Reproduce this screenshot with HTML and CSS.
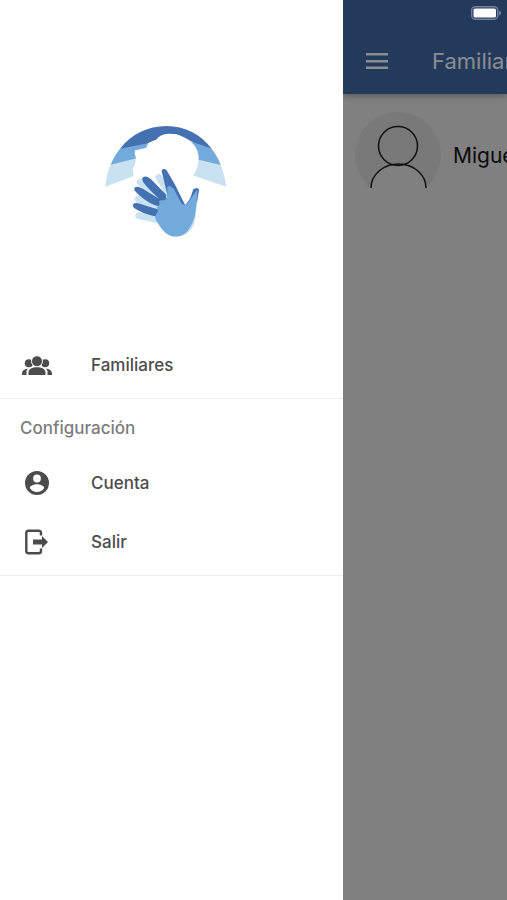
FILE: index.html
```html
<!DOCTYPE html>
<html lang="es">
<head>
<meta charset="utf-8">
<meta name="viewport" content="width=device-width, initial-scale=1">
<title>Familiares</title>
<link rel="stylesheet" href="styles.css">
</head>
<body>
<div class="app">
  <aside class="drawer">
    <header class="brand">
      <svg class="logo" viewBox="0 0 420 390" aria-hidden="true">
        <path fill="#c8e2f2" d="M27 213C31 187 36 166 44 145L120 126L130 160L113 180L27 213ZM391 212C387 186 382 165 374 146L300 127L280 175Z"/>
        <path fill="#74a9db" d="M44 146C51 128 60 112 72 98L160 70L160 105L125 126ZM374 147C367 128 358 111 345 97L285 77L290 127Z"/>
        <path fill="#4471b2" d="M72 98C104 56 155 30 212 30C266 30 316 56 347 98L298 82L240 54L180 72L156 82Z"/>
        <path fill="#fff" d="M180 71C190 58 204 52 221 53C243 54 262 60 278 72C298 87 308 105 308 126C307 147 302 163 293 176L273 200L240 245L150 205L113 180L110 160L117 145L120 125L116 114L117 103L126 101L151 95L156 82Z"/>
        <g fill="none" stroke="#c8e2f2" stroke-linecap="round" stroke-width="20">
          <path d="M188 184L218 232M132 199L195 250M126 249L190 286M128 299L190 312"/>
        </g>
        <path fill="#c8e2f2" d="M181 300L205 346C222 362 246 367 266 356C285 346 295 331 298 306L309 221L290 240L260 290Z"/>
        <path fill="#4471b2" d="M141 184C147 178 157 183 165 190L211 236L209 257L196 254C176 236 155 216 143 200C138 193 137 188 141 184ZM117 214C124 209 135 215 145 221L195 252L192 272C169 267 147 252 128 236C118 228 111 220 117 214ZM112 264C118 258 133 263 145 268L190 281L186 302C165 300 142 292 126 283C114 277 107 270 112 264Z"/>
        <path fill="#4471b2" d="M197 166C197 157 208 157 213 165L236 204L267 266L245 290L215 240ZM291 221C296 215 309 215 309 221L304 253L288 286L264 270C283 253 287 236 291 221Z"/>
        <path fill="#74a9db" d="M214 212C222 208 229 213 234 220C244 239 250 255 259 264C266 270 274 265 279 256C288 243 295 231 304 221C306 239 301 252 301 265L298 291C295 310 289 327 275 345C262 359 242 365 225 360C208 354 197 341 188 325C178 309 174 303 181 295L186 284L182 275L190 267L190 254L208 252L214 238Z"/>
      </svg>
    </header>
    <nav>
      <section class="group">
        <a class="item" href="#familiares">
          <svg class="icon" viewBox="0 0 32 32" aria-hidden="true"><circle cx="7.800" cy="14.300" r="4"/><circle cx="24.200" cy="14.300" r="4"/><circle class="front" cx="16" cy="12.200" r="5.500"/><path d="M7.500 26v-2.500c0-3.500 3.800-5.300 8.500-5.300s8.500 1.800 8.500 5.300V26zM1 26v-1.500c0-2.600 1.900-4.200 5.800-4.900A7 7 0 0 0 5.500 24v2zM31 26v-1.500c0-2.600-1.900-4.200-5.800-4.900A7 7 0 0 1 26.500 24v2z"/></svg>
          <span>Familiares</span>
        </a>
      </section>
      <section class="group">
        <h2 class="group-title">Configuración</h2>
        <a class="item" href="#cuenta">
          <svg class="icon" viewBox="0 0 32 32" aria-hidden="true"><path fill-rule="evenodd" d="M16 4a12 12 0 1 0 0 24a12 12 0 0 0 0-24m0 3.600a3.900 3.900 0 1 1 0 7.800a3.900 3.900 0 0 1 0-7.800m0 17.300a8.700 8.700 0 0 1-7.200-3.900c0-2.400 4.800-3.700 7.200-3.700s7.200 1.300 7.200 3.700A8.700 8.700 0 0 1 16 24.900"/></svg>
          <span>Cuenta</span>
        </a>
        <a class="item" href="#salir">
          <svg class="icon" viewBox="0 0 32 32" aria-hidden="true"><path fill="none" stroke="currentColor" stroke-width="2.400" d="M20 9.500V7Q20 4.800 17.800 4.800H7.500Q5.300 4.800 5.300 7V25Q5.300 27.200 7.500 27.200H17.800Q20 27.200 20 25V22.500"/><path d="M12 13.500h9V10l6 6L21 22v-3.500h-9z"/></svg>
          <span>Salir</span>
        </a>
      </section>
    </nav>
  </aside>
  <main class="page">
    <header class="topbar">
      <div class="status">
        <svg class="battery" viewBox="0 0 30 14" aria-hidden="true"><rect x=".7" y=".7" width="26" height="12.600" rx="3.500" fill="none" stroke="#7580a0" stroke-width="1.400"/><rect x="2.500" y="2.500" width="22.500" height="9" rx="1.500" fill="#fff"/><path fill="#7580a0" d="M28 4.500q2 .8 2 2.500t-2 2.500z"/></svg>
      </div>
      <div class="toolbar">
        <button class="menu" type="button" aria-label="Menú">
          <svg viewBox="0 0 24 18" aria-hidden="true"><path d="M1 1h22v2.500H1zM1 8h22v2.500H1zM1 14.500h22V17H1z"/></svg>
        </button>
        <h1 class="title">Familiares</h1>
      </div>
    </header>
    <a class="person" href="#miguel">
      <svg class="avatar" viewBox="0 0 86 86" aria-hidden="true"><circle cx="43" cy="43" r="43" fill="#797979"/><path fill="#808080" d="M16 76a27.500 24 0 0 1 55 0v10H16z"/><g fill="none" stroke="#111" stroke-width="1.500"><circle cx="43" cy="34" r="19.500"/><path d="M16 76a27.500 24 0 0 1 55 0"/></g></svg>
      <span>Miguel</span>
    </a>
  </main>
</div>
</body>
</html>
```
FILE: styles.css
```css
* {
  box-sizing: border-box;
}

body {
  margin: 0;
  font-family: Inter, "Liberation Sans", sans-serif;
  background: #fff;
}

a {
  color: inherit;
  text-decoration: none;
}

.app {
  display: flex;
  min-height: 100vh;
  overflow: hidden;
}

.drawer {
  flex: 0 0 343px;
  background: #fff;
  color: #4c4c4c;
}

.brand {
  display: flex;
  justify-content: center;
  padding: 116px 12px 89px 0;
}

.logo {
  width: 140px;
  height: 130px;
}

.group {
  padding: 4px 0;
  border-bottom: 1px solid #eee;
}

.group:first-child {
  padding-top: 0;
}

.group-title {
  margin: 0;
  padding-left: 20px;
  font-size: 17px;
  font-weight: 500;
  line-height: 50px;
  color: #7c7c7c;
}

.item {
  display: flex;
  align-items: center;
  gap: 38px;
  height: 59px;
  padding-left: 21px;
  font-size: 17px;
  font-weight: 500;
}

.icon {
  width: 32px;
  height: 32px;
  fill: currentColor;
}

.front {
  stroke: #fff;
  stroke-width: 1px;
}

.page {
  flex: 1;
  min-width: 0;
  overflow: hidden;
  background: #808080;
}

.topbar {
  background: #243a5b;
  color: #8a8d92;
  box-shadow: 0 2px 6px rgba(0, 0, 0, 0.3);
}

.status {
  display: flex;
  justify-content: flex-end;
  height: 27px;
  padding: 6px 6px 0 0;
}

.battery {
  width: 30px;
  height: 14px;
}

.toolbar {
  display: flex;
  align-items: center;
  gap: 43px;
  height: 67px;
  padding-left: 22px;
}

.menu {
  display: flex;
  flex: none;
  padding: 0;
  border: 0;
  background: none;
  color: inherit;
}

.menu svg {
  width: 24px;
  height: 18px;
  fill: currentColor;
}

.title {
  margin: 0;
  font-size: 22px;
  font-weight: 400;
}

.person {
  display: flex;
  align-items: center;
  gap: 12px;
  padding: 18px 12px;
  font-size: 21px;
  color: #0a0a0a;
}

.avatar {
  flex: none;
  width: 86px;
  height: 86px;
}
```
